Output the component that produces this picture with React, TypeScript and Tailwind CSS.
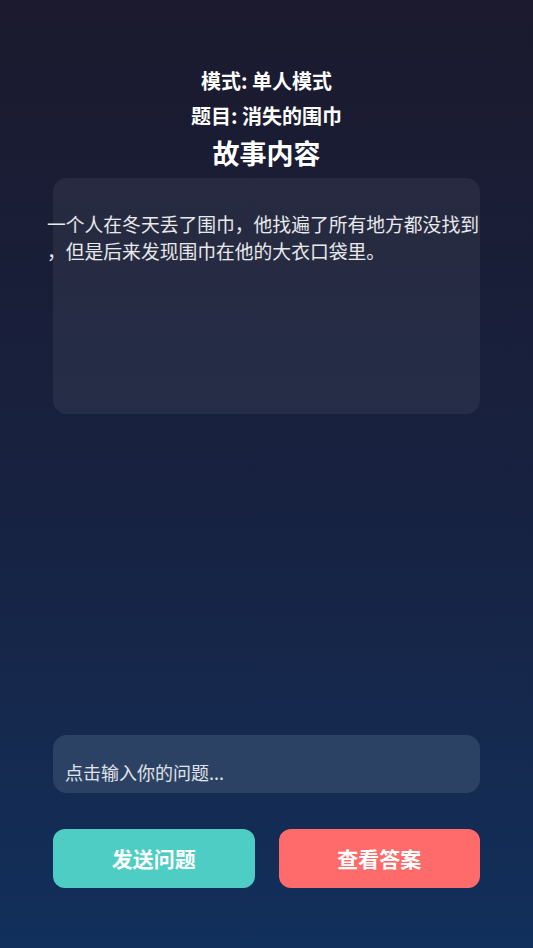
export default function App() {
  return (
    <div
      className="min-h-screen w-full flex flex-col items-center bg-gradient-to-b from-[#1b1a2e] via-[#17213f] to-[#11305c] text-white"
      style={{ fontFamily: '"Noto Sans CJK SC", "Noto Sans", sans-serif' }}
    >
      {/* Header */}
      <div className="pt-[66px] flex flex-col items-center">
        <p className="text-[20px] font-bold leading-[30px]">模式: 单人模式</p>
        <p className="text-[20px] font-bold leading-[30px] mt-[5px]">题目: 消失的围巾</p>
        <h1 className="text-[27px] font-bold leading-[40px] mt-[2px]">故事内容</h1>
      </div>

      {/* Story card */}
      <div className="mt-[5px] w-[427px] h-[236px] rounded-[14px] bg-white/[0.06] pt-[32px]">
        <p className="-ml-[6px] w-[440px] text-[18.8px] leading-[27px] text-white/90 [line-break:anywhere]">
          一个人在冬天丢了围巾，他找遍了所有地方都没找到，但是后来发现围巾在他的大衣口袋里。
        </p>
      </div>

      <div className="flex-1" />

      {/* Input */}
      <div className="w-[427px] h-[58px] rounded-[14px] bg-[#2c4264] flex items-center px-[12px] pt-[16px]">
        <span className="text-[18px] text-white/85">点击输入你的问题...</span>
      </div>

      {/* Buttons */}
      <div className="mt-[36px] mb-[60px] w-[427px] flex gap-[24px]">
        <button className="flex-1 h-[59px] rounded-[12px] bg-[#4ecdc4] text-[21px] font-bold text-white">
          发送问题
        </button>
        <button className="flex-1 h-[59px] rounded-[12px] bg-[#ff6b6b] text-[21px] font-bold text-white">
          查看答案
        </button>
      </div>
    </div>
  )
}
